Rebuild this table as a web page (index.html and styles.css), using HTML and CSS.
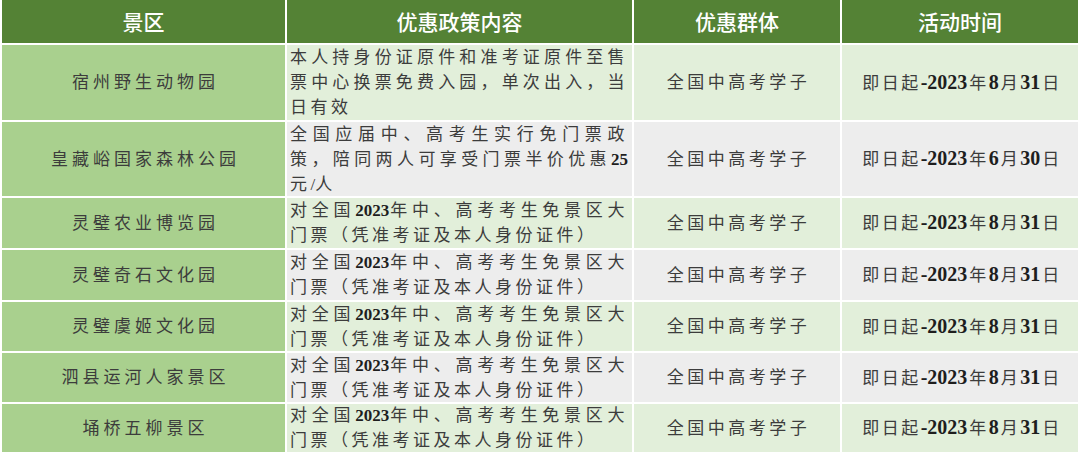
FILE: index.html
```html
<!DOCTYPE html>
<html lang="zh-CN">
<head>
<meta charset="utf-8">
<title>中高考学子景区优惠政策</title>
<link rel="stylesheet" href="styles.css">
</head>
<body>
<div class="sheet">
  <div class="th">景区</div>
  <div class="th">优惠政策内容</div>
  <div class="th">优惠群体</div>
  <div class="th">活动时间</div>

  <div class="name">宿州野生动物园</div>
  <div class="policy r-green"><p class="txt">本人持身份证原件和准考证原件至售票中心换票免费入园，单次出入，当日有效</p></div>
  <div class="group r-green">全国中高考学子</div>
  <div class="date r-green"><span class="txt">即日起<span class="num">-2023</span>年<span class="num">8</span>月<span class="num">31</span>日</span></div>

  <div class="name">皇藏峪国家森林公园</div>
  <div class="policy r-grey"><p class="txt">全国应届中、高考生实行免门票政策，陪同两人可享受门票半价优惠<span class="num">25</span>元<span class="slash">/</span>人</p></div>
  <div class="group r-grey">全国中高考学子</div>
  <div class="date r-grey"><span class="txt">即日起<span class="num">-2023</span>年<span class="num">6</span>月<span class="num">30</span>日</span></div>

  <div class="name">灵璧农业博览园</div>
  <div class="policy r-green"><p class="txt">对全国<span class="num">2023</span>年中、高考考生免景区大门票（凭准考证及本人身份证件）</p></div>
  <div class="group r-green">全国中高考学子</div>
  <div class="date r-green"><span class="txt">即日起<span class="num">-2023</span>年<span class="num">8</span>月<span class="num">31</span>日</span></div>

  <div class="name">灵璧奇石文化园</div>
  <div class="policy r-grey"><p class="txt">对全国<span class="num">2023</span>年中、高考考生免景区大门票（凭准考证及本人身份证件）</p></div>
  <div class="group r-grey">全国中高考学子</div>
  <div class="date r-grey"><span class="txt">即日起<span class="num">-2023</span>年<span class="num">8</span>月<span class="num">31</span>日</span></div>

  <div class="name">灵璧虞姬文化园</div>
  <div class="policy r-green"><p class="txt">对全国<span class="num">2023</span>年中、高考考生免景区大门票（凭准考证及本人身份证件）</p></div>
  <div class="group r-green">全国中高考学子</div>
  <div class="date r-green"><span class="txt">即日起<span class="num">-2023</span>年<span class="num">8</span>月<span class="num">31</span>日</span></div>

  <div class="name">泗县运河人家景区</div>
  <div class="policy r-grey"><p class="txt">对全国<span class="num">2023</span>年中、高考考生免景区大门票（凭准考证及本人身份证件）</p></div>
  <div class="group r-grey">全国中高考学子</div>
  <div class="date r-grey"><span class="txt">即日起<span class="num">-2023</span>年<span class="num">8</span>月<span class="num">31</span>日</span></div>

  <div class="name">埇桥五柳景区</div>
  <div class="policy r-green"><p class="txt">对全国<span class="num">2023</span>年中、高考考生免景区大门票（凭准考证及本人身份证件）</p></div>
  <div class="group r-green">全国中高考学子</div>
  <div class="date r-green"><span class="txt">即日起<span class="num">-2023</span>年<span class="num">8</span>月<span class="num">31</span>日</span></div>
</div>
</body>
</html>
```
FILE: styles.css
```css
html, body {
  margin: 0;
  padding: 0;
  background: #ffffff;
}

.sheet {
  display: grid;
  grid-template-columns: 283px 345px 206px 236px;
  grid-template-rows: 43px 75px 74px 50px 50px 49px 49px 48px;
  gap: 2px;
  padding: 0 2px 0 2px;
  width: 1076px;
  font-family: "Liberation Serif", "Noto Sans CJK SC", serif;
  font-size: 17px;
  line-height: 25px;
  color: #3c3c3c;
}

.th {
  background: #548235;
  color: #ffffff;
  font-family: "Noto Sans CJK SC", "Noto Sans", sans-serif;
  font-size: 21px;
  font-weight: 500;
  display: flex;
  align-items: center;
  justify-content: center;
  padding-bottom: 1px;
}

.name {
  background: #a9d08e;
  display: flex;
  align-items: center;
  justify-content: center;
  letter-spacing: 4px;
  padding-left: 4px;
}

.policy {
  display: flex;
  align-items: center;
  padding: 0 4px 0 3px;
}

.policy .txt {
  margin: 0;
  width: 100%;
  letter-spacing: 3.5px;
  text-align: justify;
}

.group {
  display: flex;
  align-items: center;
  justify-content: center;
  letter-spacing: 3.5px;
  padding-left: 3px;
}

.date {
  display: flex;
  align-items: center;
  justify-content: center;
  padding-left: 4px;
}

.date .txt {
  letter-spacing: 2.5px;
  white-space: nowrap;
}

.r-green { background: #e2efda; }
.r-grey { background: #ededed; }

.num {
  font-family: "Liberation Serif", serif;
  font-weight: bold;
  letter-spacing: 0;
  color: #1e1e1e;
}

.date .num {
  font-size: 20px;
  margin-right: 2px;
}

.slash {
  letter-spacing: 0;
}
```
